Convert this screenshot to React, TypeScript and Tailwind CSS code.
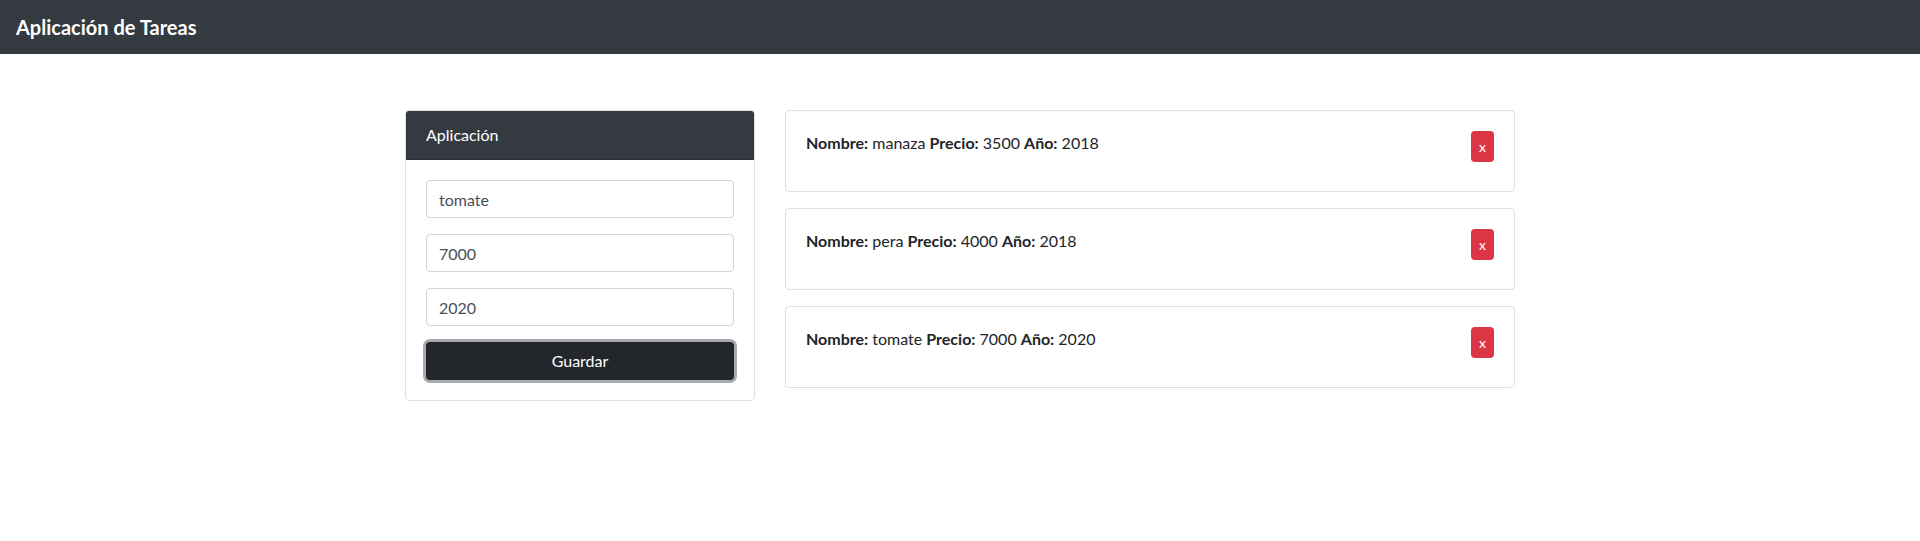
const items = [
  { nombre: "manaza", precio: 3500, anio: 2018 },
  { nombre: "pera", precio: 4000, anio: 2018 },
  { nombre: "tomate", precio: 7000, anio: 2020 },
];

const font = "font-['Lato','Open_Sans','Liberation_Sans',sans-serif]";

function App() {
  return (
    <div className={`min-h-[541px] bg-white text-[#212529] ${font}`}>
      <nav className="flex h-[54px] items-center bg-[#343a40] px-4">
        <span className="text-[20px] font-bold leading-[30px] text-white">
          Aplicación de Tareas
        </span>
      </nav>

      <div className="mx-auto mt-[56px] flex w-[1140px]">
        <div className="w-[380px] px-[15px]">
          <div className="overflow-hidden rounded border border-black/[0.125]">
            <div className="border-b border-black/[0.125] bg-[#343a40] px-5 py-3 text-base leading-6 text-white">
              Aplicación
            </div>
            <div className="flex flex-col gap-4 p-5">
              {["tomate", "7000", "2020"].map((v) => (
                <input
                  key={v}
                  defaultValue={v}
                  className="h-[38px] w-full rounded border border-[#ced4da] px-3 text-base text-[#495057] outline-none"
                />
              ))}
              <button className="h-[38px] w-full rounded bg-[#23272b] text-base text-white shadow-[0_0_0_3px_rgba(82,88,93,0.5)]">
                Guardar
              </button>
            </div>
          </div>
        </div>

        <div className="w-[760px] px-[15px]">
          {items.map((it) => (
            <div
              key={it.nombre}
              className="mb-4 flex items-start justify-between rounded border border-black/[0.125] p-5"
            >
              <p className="mb-4 text-base leading-6">
                <b>Nombre:</b> {it.nombre} <b>Precio:</b> {it.precio}{" "}
                <b>Año:</b> {it.anio}
              </p>
              <button className="h-[31px] rounded bg-[#dc3545] px-2 text-sm leading-[21px] text-white">
                x
              </button>
            </div>
          ))}
        </div>
      </div>
    </div>
  );
}

export default App;
